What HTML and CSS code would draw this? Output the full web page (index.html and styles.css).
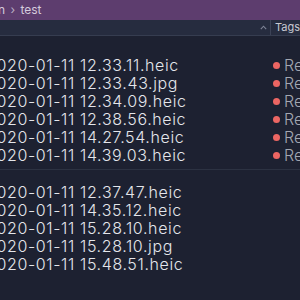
FILE: index.html
```html
<!DOCTYPE html>
<html lang="en">
<head>
  <meta charset="UTF-8" />
  <title>test</title>
  <link rel="stylesheet" href="styles.css">
</head>
<body>

  <div class="titlebar">
    <span class="path">n <span class="sep">›</span> test</span>
  </div>

  <div class="header">
    <div class="col-name">
      <svg class="sort" width="7" height="5" viewBox="0 0 7 5">
        <path d="M0.8 4.2 L3.5 1.2 L6.2 4.2" fill="none" stroke="#7d8396" stroke-width="1.1"/>
      </svg>
    </div>
    <div class="col-tags">Tags</div>
  </div>

  <div class="group first">
    <div class="row"><span class="name">2020-01-11 12.33.11.heic</span><span class="tag"><i class="dot"></i>Red</span></div>
    <div class="row"><span class="name">2020-01-11 12.33.43.jpg</span><span class="tag"><i class="dot"></i>Red</span></div>
    <div class="row"><span class="name">2020-01-11 12.34.09.heic</span><span class="tag"><i class="dot"></i>Red</span></div>
    <div class="row"><span class="name">2020-01-11 12.38.56.heic</span><span class="tag"><i class="dot"></i>Red</span></div>
    <div class="row"><span class="name">2020-01-11 14.27.54.heic</span><span class="tag"><i class="dot"></i>Red</span></div>
    <div class="row"><span class="name">2020-01-11 14.39.03.heic</span><span class="tag"><i class="dot"></i>Red</span></div>
  </div>

  <div class="group second">
    <div class="row"><span class="name">2020-01-11 12.37.47.heic</span></div>
    <div class="row"><span class="name">2020-01-11 14.35.12.heic</span></div>
    <div class="row"><span class="name">2020-01-11 15.28.10.heic</span></div>
    <div class="row"><span class="name">2020-01-11 15.28.10.jpg</span></div>
    <div class="row"><span class="name">2020-01-11 15.48.51.heic</span></div>
  </div>

</body>
</html>
```

FILE: styles.css
```css
:root {
  --title: #5d3d6e;
  --header: #262c3f;
  --bg: #1d2131;
  --line: #363d50;
  --text: #e4e6eb;
  --muted: #a3a7b1;
  --red: #ec6663;
}

html, body {
  margin: 0;
  height: 100%;
  overflow: hidden;
}

body {
  background: var(--bg);
  font-family: 'Inter', 'Liberation Sans', sans-serif;
  color: var(--text);
}

.titlebar {
  height: 20px;
  background: var(--title);
  display: flex;
  align-items: center;
}

.path {
  margin-left: -2px;
  font-size: 12px;
  line-height: 14px;
  color: #d4cbdc;
}

.path .sep {
  color: #b9aec4;
  margin: 0 2px;
}

.header {
  height: 15px;
  background: var(--header);
  border-bottom: 1px solid var(--line);
  display: flex;
  align-items: center;
}

.col-name {
  width: 280px;
  height: 100%;
  display: flex;
  align-items: center;
  justify-content: flex-end;
  border-right: 1px solid #3c4357;
  box-sizing: border-box;
  padding-right: 3px;
}

.col-tags {
  padding-left: 4px;
  font-size: 11px;
  line-height: 13px;
  color: #c6c9d1;
}

.group {
  margin-left: -14px;
}

.group.first {
  padding: 20px 0 5px;
  border-bottom: 1px solid #2c3242;
}

.group.second {
  padding-top: 13px;
}

.row {
  height: 18px;
  line-height: 18px;
  display: flex;
  align-items: center;
}

.name {
  width: 287px;
  flex: none;
  font-size: 16px;
  font-weight: 300;
  letter-spacing: 0.62px;
  white-space: nowrap;
}

.tag {
  display: flex;
  align-items: center;
  gap: 4px;
  font-size: 16px;
  font-weight: 300;
  color: var(--muted);
  white-space: nowrap;
}

.dot {
  width: 7px;
  height: 7px;
  border-radius: 50%;
  background: var(--red);
}
```
